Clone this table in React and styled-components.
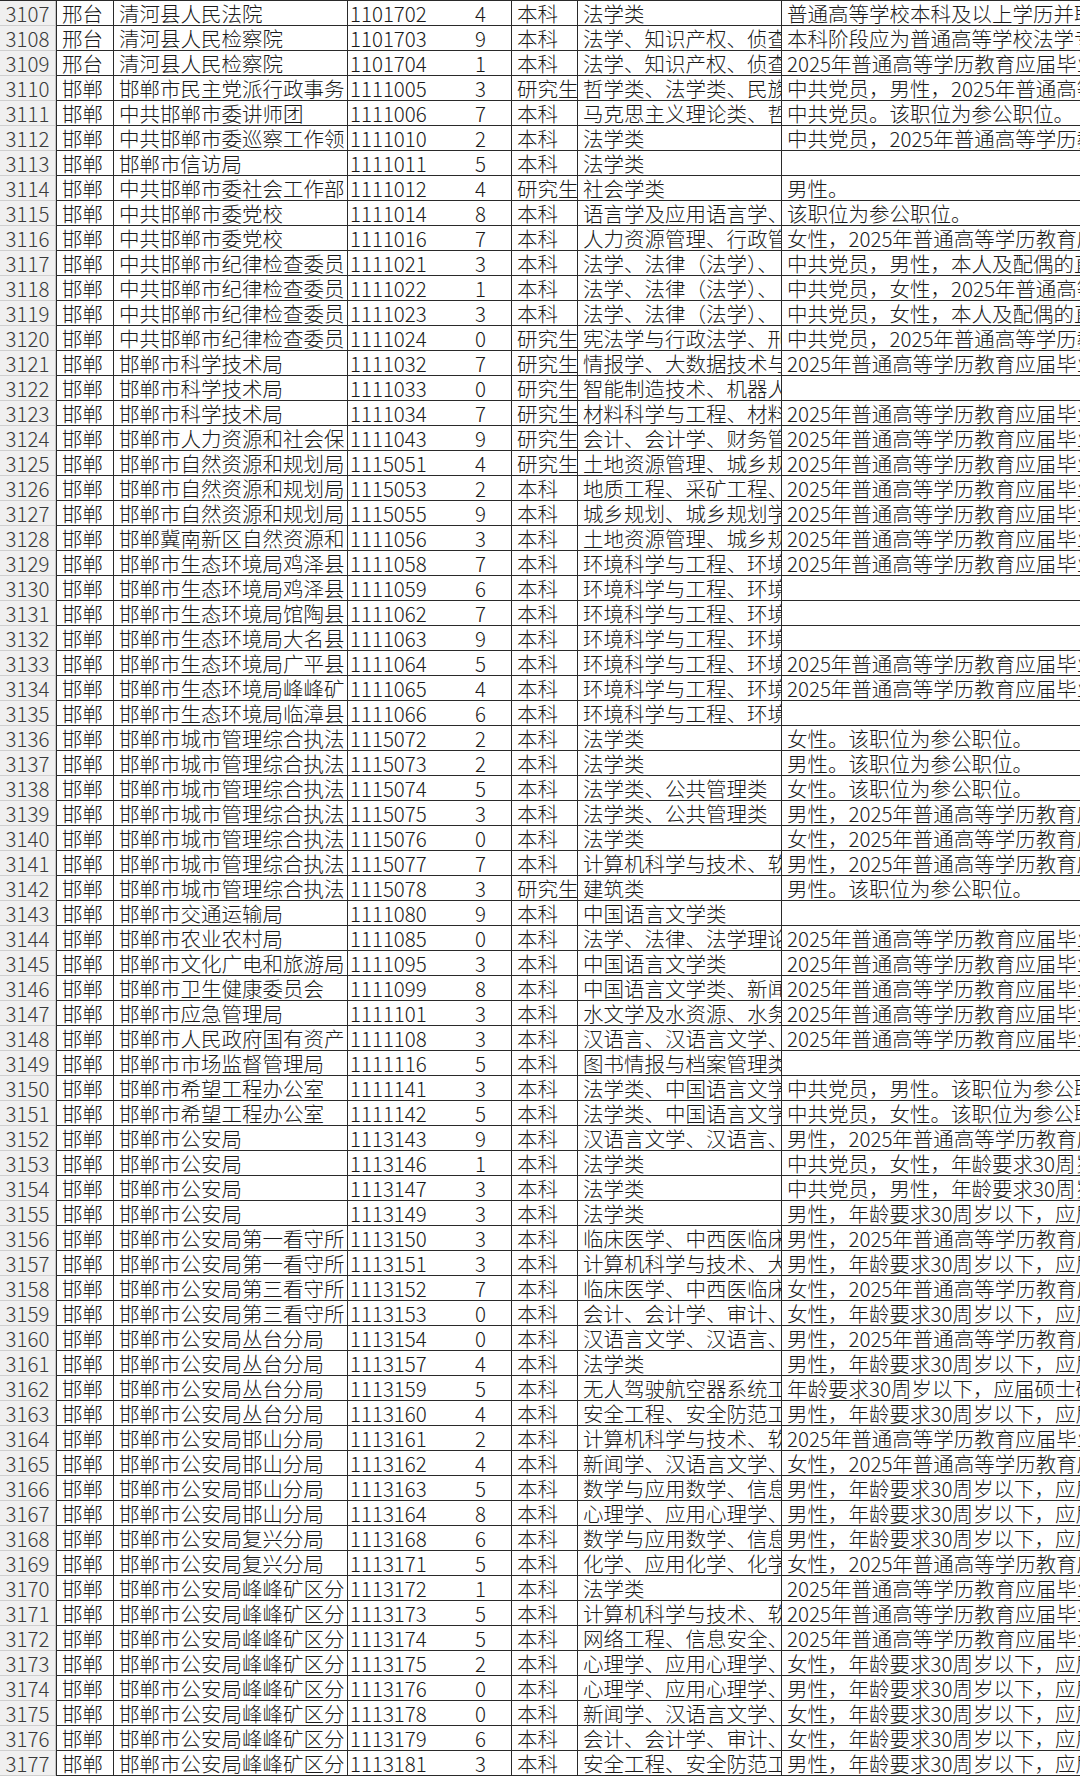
import styled, { createGlobalStyle } from "styled-components";

const GlobalStyle = createGlobalStyle`
  html, body {
    margin: 0;
    padding: 0;
    background: #fff;
    overflow: hidden;
  }
  body {
    font-family: "Noto Sans CJK SC", "Noto Sans", sans-serif;
  }
`

// column widths of the sheet, left to right
const WIDTHS = [56, 58, 234, 102, 62, 66, 204, 318]

// row | city | unit | code | count | degree | major | notes
const RAW = `3107|邢台|清河县人民法院|1101702|4|本科|法学类|普通高等学校本科及以上学历并取得
3108|邢台|清河县人民检察院|1101703|9|本科|法学、知识产权、侦查学|本科阶段应为普通高等学校法学专业
3109|邢台|清河县人民检察院|1101704|1|本科|法学、知识产权、侦查学|2025年普通高等学历教育应届毕业生
3110|邯郸|邯郸市民主党派行政事务|1111005|3|研究生|哲学类、法学类、民族学|中共党员，男性，2025年普通高等
3111|邯郸|中共邯郸市委讲师团|1111006|7|本科|马克思主义理论类、哲学|中共党员。该职位为参公职位。
3112|邯郸|中共邯郸市委巡察工作领|1111010|2|本科|法学类|中共党员，2025年普通高等学历教育
3113|邯郸|邯郸市信访局|1111011|5|本科|法学类|
3114|邯郸|中共邯郸市委社会工作部|1111012|4|研究生|社会学类|男性。
3115|邯郸|中共邯郸市委党校|1111014|8|本科|语言学及应用语言学、汉|该职位为参公职位。
3116|邯郸|中共邯郸市委党校|1111016|7|本科|人力资源管理、行政管理|女性，2025年普通高等学历教育应届
3117|邯郸|中共邯郸市纪律检查委员|1111021|3|本科|法学、法律（法学）、|中共党员，男性，本人及配偶的直系
3118|邯郸|中共邯郸市纪律检查委员|1111022|1|本科|法学、法律（法学）、|中共党员，女性，2025年普通高等
3119|邯郸|中共邯郸市纪律检查委员|1111023|3|本科|法学、法律（法学）、|中共党员，女性，本人及配偶的直系
3120|邯郸|中共邯郸市纪律检查委员|1111024|0|研究生|宪法学与行政法学、刑法|中共党员，2025年普通高等学历教育
3121|邯郸|邯郸市科学技术局|1111032|7|研究生|情报学、大数据技术与工|2025年普通高等学历教育应届毕业生
3122|邯郸|邯郸市科学技术局|1111033|0|研究生|智能制造技术、机器人工|
3123|邯郸|邯郸市科学技术局|1111034|7|研究生|材料科学与工程、材料学|2025年普通高等学历教育应届毕业生
3124|邯郸|邯郸市人力资源和社会保|1111043|9|研究生|会计、会计学、财务管理|2025年普通高等学历教育应届毕业生
3125|邯郸|邯郸市自然资源和规划局|1115051|4|研究生|土地资源管理、城乡规划|2025年普通高等学历教育应届毕业生
3126|邯郸|邯郸市自然资源和规划局|1115053|2|本科|地质工程、采矿工程、测|2025年普通高等学历教育应届毕业生
3127|邯郸|邯郸市自然资源和规划局|1115055|9|本科|城乡规划、城乡规划学、|2025年普通高等学历教育应届毕业生
3128|邯郸|邯郸冀南新区自然资源和|1111056|3|本科|土地资源管理、城乡规划|2025年普通高等学历教育应届毕业生
3129|邯郸|邯郸市生态环境局鸡泽县|1111058|7|本科|环境科学与工程、环境工|2025年普通高等学历教育应届毕业生
3130|邯郸|邯郸市生态环境局鸡泽县|1111059|6|本科|环境科学与工程、环境工|
3131|邯郸|邯郸市生态环境局馆陶县|1111062|7|本科|环境科学与工程、环境工|
3132|邯郸|邯郸市生态环境局大名县|1111063|9|本科|环境科学与工程、环境工|
3133|邯郸|邯郸市生态环境局广平县|1111064|5|本科|环境科学与工程、环境工|2025年普通高等学历教育应届毕业生
3134|邯郸|邯郸市生态环境局峰峰矿|1111065|4|本科|环境科学与工程、环境工|2025年普通高等学历教育应届毕业生
3135|邯郸|邯郸市生态环境局临漳县|1111066|6|本科|环境科学与工程、环境工|
3136|邯郸|邯郸市城市管理综合执法|1115072|2|本科|法学类|女性。该职位为参公职位。
3137|邯郸|邯郸市城市管理综合执法|1115073|2|本科|法学类|男性。该职位为参公职位。
3138|邯郸|邯郸市城市管理综合执法|1115074|5|本科|法学类、公共管理类|女性。该职位为参公职位。
3139|邯郸|邯郸市城市管理综合执法|1115075|3|本科|法学类、公共管理类|男性，2025年普通高等学历教育应届
3140|邯郸|邯郸市城市管理综合执法|1115076|0|本科|法学类|女性，2025年普通高等学历教育应届
3141|邯郸|邯郸市城市管理综合执法|1115077|7|本科|计算机科学与技术、软件|男性，2025年普通高等学历教育应届
3142|邯郸|邯郸市城市管理综合执法|1115078|3|研究生|建筑类|男性。该职位为参公职位。
3143|邯郸|邯郸市交通运输局|1111080|9|本科|中国语言文学类|
3144|邯郸|邯郸市农业农村局|1111085|0|本科|法学、法律、法学理论、|2025年普通高等学历教育应届毕业生
3145|邯郸|邯郸市文化广电和旅游局|1111095|3|本科|中国语言文学类|2025年普通高等学历教育应届毕业生
3146|邯郸|邯郸市卫生健康委员会|1111099|8|本科|中国语言文学类、新闻传|2025年普通高等学历教育应届毕业生
3147|邯郸|邯郸市应急管理局|1111101|3|本科|水文学及水资源、水务工|2025年普通高等学历教育应届毕业生
3148|邯郸|邯郸市人民政府国有资产|1111108|3|本科|汉语言、汉语言文学、汉|2025年普通高等学历教育应届毕业生
3149|邯郸|邯郸市市场监督管理局|1111116|5|本科|图书情报与档案管理类|
3150|邯郸|邯郸市希望工程办公室|1111141|3|本科|法学类、中国语言文学类|中共党员，男性。该职位为参公职位
3151|邯郸|邯郸市希望工程办公室|1111142|5|本科|法学类、中国语言文学类|中共党员，女性。该职位为参公职位
3152|邯郸|邯郸市公安局|1113143|9|本科|汉语言文学、汉语言、秘|男性，2025年普通高等学历教育应届
3153|邯郸|邯郸市公安局|1113146|1|本科|法学类|中共党员，女性，年龄要求30周岁
3154|邯郸|邯郸市公安局|1113147|3|本科|法学类|中共党员，男性，年龄要求30周岁
3155|邯郸|邯郸市公安局|1113149|3|本科|法学类|男性，年龄要求30周岁以下，应届
3156|邯郸|邯郸市公安局第一看守所|1113150|3|本科|临床医学、中西医临床医|男性，2025年普通高等学历教育应届
3157|邯郸|邯郸市公安局第一看守所|1113151|3|本科|计算机科学与技术、大数|男性，年龄要求30周岁以下，应届
3158|邯郸|邯郸市公安局第三看守所|1113152|7|本科|临床医学、中西医临床医|女性，2025年普通高等学历教育应届
3159|邯郸|邯郸市公安局第三看守所|1113153|0|本科|会计、会计学、审计、审|女性，年龄要求30周岁以下，应届
3160|邯郸|邯郸市公安局丛台分局|1113154|0|本科|汉语言文学、汉语言、秘|男性，2025年普通高等学历教育应届
3161|邯郸|邯郸市公安局丛台分局|1113157|4|本科|法学类|男性，年龄要求30周岁以下，应届
3162|邯郸|邯郸市公安局丛台分局|1113159|5|本科|无人驾驶航空器系统工程|年龄要求30周岁以下，应届硕士研究
3163|邯郸|邯郸市公安局丛台分局|1113160|4|本科|安全工程、安全防范工程|男性，年龄要求30周岁以下，应届
3164|邯郸|邯郸市公安局邯山分局|1113161|2|本科|计算机科学与技术、软件|2025年普通高等学历教育应届毕业生
3165|邯郸|邯郸市公安局邯山分局|1113162|4|本科|新闻学、汉语言文学、汉|女性，2025年普通高等学历教育应届
3166|邯郸|邯郸市公安局邯山分局|1113163|5|本科|数学与应用数学、信息与|男性，年龄要求30周岁以下，应届
3167|邯郸|邯郸市公安局邯山分局|1113164|8|本科|心理学、应用心理学、临|男性，年龄要求30周岁以下，应届
3168|邯郸|邯郸市公安局复兴分局|1113168|6|本科|数学与应用数学、信息与|男性，年龄要求30周岁以下，应届
3169|邯郸|邯郸市公安局复兴分局|1113171|5|本科|化学、应用化学、化学生|女性，2025年普通高等学历教育应届
3170|邯郸|邯郸市公安局峰峰矿区分|1113172|1|本科|法学类|2025年普通高等学历教育应届毕业生
3171|邯郸|邯郸市公安局峰峰矿区分|1113173|5|本科|计算机科学与技术、软件|2025年普通高等学历教育应届毕业生
3172|邯郸|邯郸市公安局峰峰矿区分|1113174|5|本科|网络工程、信息安全、数|2025年普通高等学历教育应届毕业生
3173|邯郸|邯郸市公安局峰峰矿区分|1113175|2|本科|心理学、应用心理学、临|女性，年龄要求30周岁以下，应届
3174|邯郸|邯郸市公安局峰峰矿区分|1113176|0|本科|心理学、应用心理学、临|男性，年龄要求30周岁以下，应届
3175|邯郸|邯郸市公安局峰峰矿区分|1113178|0|本科|新闻学、汉语言文学、汉|女性，年龄要求30周岁以下，应届
3176|邯郸|邯郸市公安局峰峰矿区分|1113179|6|本科|会计、会计学、审计、审|女性，年龄要求30周岁以下，应届
3177|邯郸|邯郸市公安局峰峰矿区分|1113181|3|本科|安全工程、安全防范工程|男性，年龄要求30周岁以下，应届`

const rows = RAW.split("\n").map(line => line.split("|"))

const App = () => {
  return (
    <Sheet>
      <GlobalStyle />
      <Table>
        <colgroup>
          { WIDTHS.map((w, i) => <Col key={ i } $w={ w } />) }
        </colgroup>
        <tbody>
          {
            rows.map(([num, city, unit, code, count, degree, major, notes]) => (
              <Row key={ num }>
                <RowHead>{ num }</RowHead>
                <Cell $first>{ city }</Cell>
                <Cell>{ unit }</Cell>
                <Cell $pad={ 2 } $noRight>{ code }</Cell>
                <Cell $align="center">{ count }</Cell>
                <Cell>{ degree }</Cell>
                <Cell>{ major }</Cell>
                <Cell>{ notes }</Cell>
              </Row>
            ))
          }
        </tbody>
      </Table>
    </Sheet>
  )
}

export default App;

const Sheet = styled.div`
  width: 1080px;
  height: 1778px;
  overflow: hidden;
  background: #fff;
`

const Table = styled.table`
  table-layout: fixed;
  width: 1100px;
  border-collapse: separate;
  border-spacing: 0;
  border-top: 1px solid #2a2a2a;
  font-family: "Noto Sans CJK SC", "Noto Sans", sans-serif;
  font-size: 20.5px;
  font-weight: 300;
  color: #1a1a1a;
`

const Col = styled.col`
  width: ${ p => p.$w }px;
`

const Row = styled.tr`
  height: 25px;
`

const RowHead = styled.td`
  height: 24px;
  padding: 0;
  background: #f0f0f0;
  color: #3a3a3a;
  text-align: center;
  line-height: 24px;
  border-right: 1px solid #c4c4c4;
  border-bottom: 1px solid #cfcfcf;
  white-space: nowrap;
  overflow: hidden;
`

const Cell = styled.td`
  height: 24px;
  padding: 0 0 0 ${ p => p.$align === 'center' ? 0 : (p.$pad ?? 5) }px;
  line-height: 24px;
  text-align: ${ p => p.$align || 'left' };
  white-space: nowrap;
  overflow: hidden;
  text-overflow: clip;
  border-bottom: 1px solid #2a2a2a;
  border-right: ${ p => p.$noRight ? 'none' : '1px solid #2a2a2a' };
  border-left: ${ p => p.$first ? '1px solid #2a2a2a' : 'none' };
`
